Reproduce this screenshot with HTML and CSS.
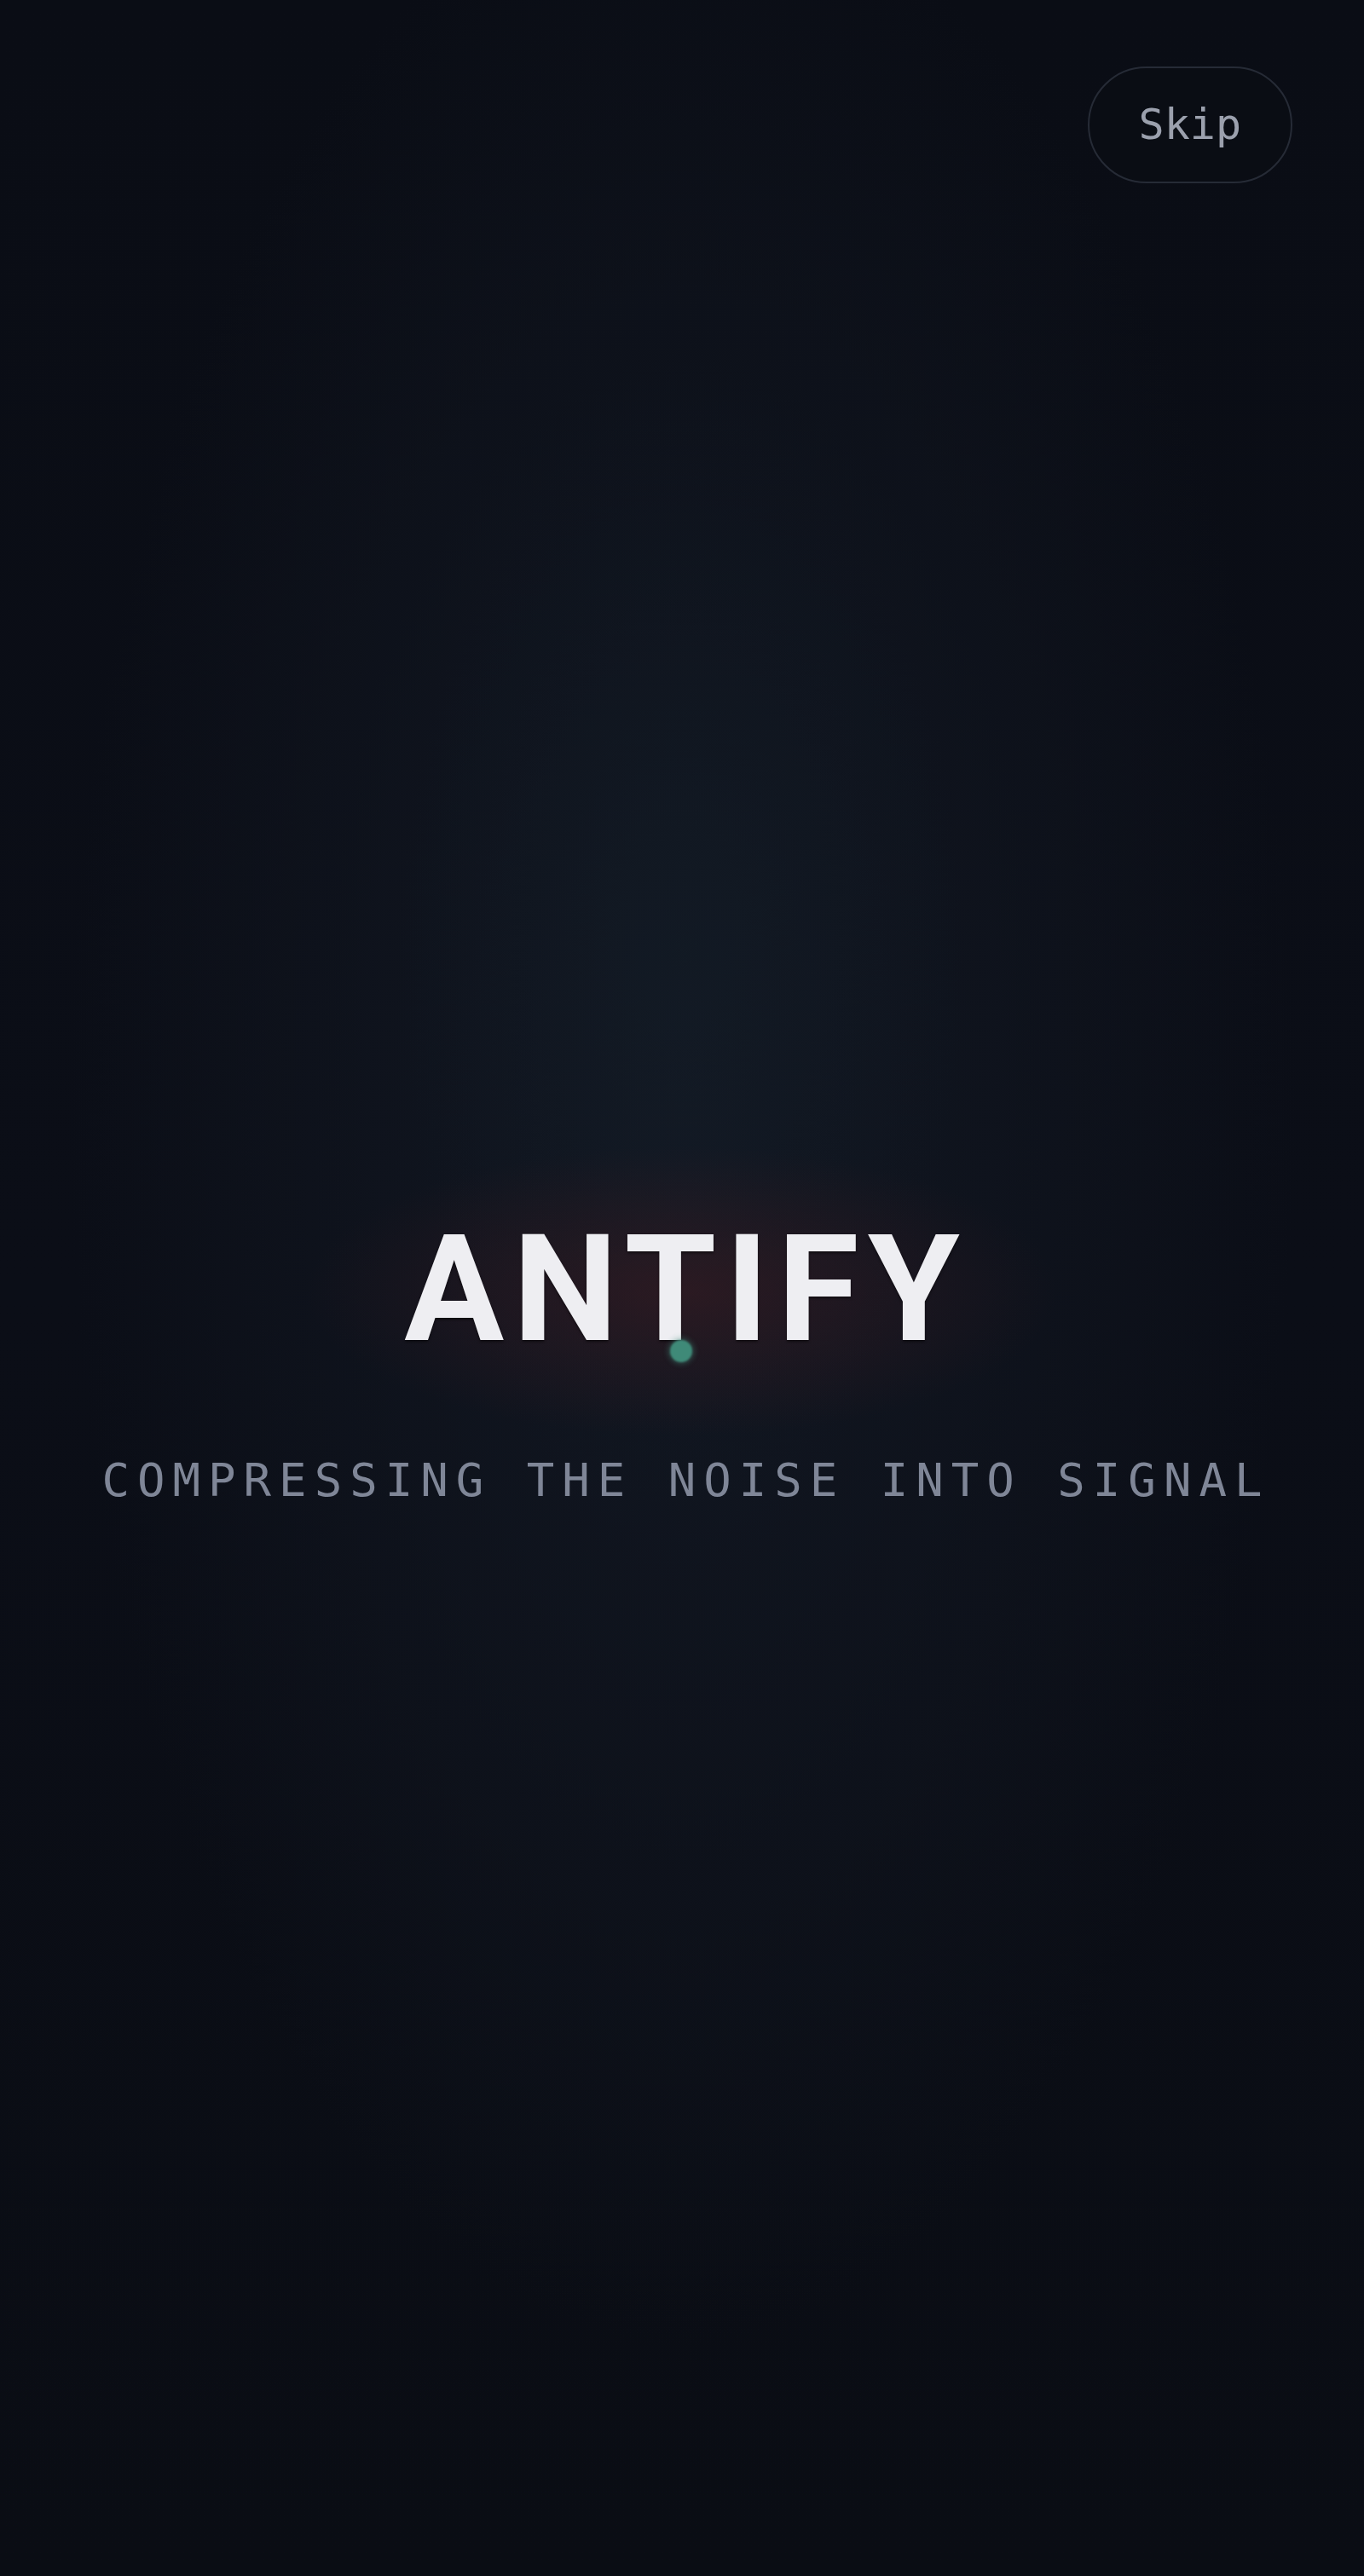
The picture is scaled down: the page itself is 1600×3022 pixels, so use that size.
FILE: index.html
```html
<!DOCTYPE html>
<html lang="en">
<head>
<meta charset="utf-8">
<title>Antify</title>
<link rel="stylesheet" href="styles.css">
</head>
<body>
<div class="screen">
  <button class="skip" type="button">Skip</button>
  <main class="intro">
    <div class="title-wrap">
      <h1 class="title">ANTIFY</h1>
      <span class="dot"></span>
    </div>
    <p class="tagline">COMPRESSING THE NOISE INTO SIGNAL</p>
  </main>
</div>
</body>
</html>
```

FILE: styles.css
```css
* { box-sizing: border-box; }

html, body {
  margin: 0;
  padding: 0;
  background: #0a0d14;
}

.screen {
  position: relative;
  width: 1600px;
  height: 3022px;
  overflow: hidden;
  background:
    radial-gradient(ellipse 440px 170px at 800px 1515px, rgba(64, 28, 34, 0.55), rgba(64, 28, 34, 0) 100%),
    radial-gradient(ellipse 330px 650px at 800px 1120px, rgba(20, 32, 42, 0.35), rgba(20, 32, 42, 0) 100%),
    radial-gradient(ellipse 720px 1450px at 800px 1300px, rgba(19, 25, 36, 0.85), rgba(17, 22, 32, 0.4) 70%, rgba(10, 13, 20, 0) 100%),
    linear-gradient(#0a0d15, #0b0e17 50%, #0a0d14);
}

.skip {
  position: absolute;
  top: 78px;
  right: 84px;
  padding: 36px 58px;
  border: 2px solid #262b36;
  border-radius: 999px;
  background: rgba(10, 13, 20, 0.6);
  color: #9ba0ad;
  font-family: "DejaVu Sans Mono", "Liberation Mono", monospace;
  font-size: 50px;
  line-height: 61px;
  cursor: pointer;
}

.intro {
  height: 100%;
  padding-top: 168px;
  display: flex;
  flex-direction: column;
  align-items: center;
  justify-content: center;
}

.title-wrap {
  position: relative;
}

.title {
  margin: 0;
  font-family: Roboto, "Liberation Sans", sans-serif;
  font-weight: 700;
  font-size: 174px;
  line-height: 1;
  letter-spacing: 0.06em;
  margin-right: -0.06em;
  color: #eeeef2;
  text-shadow: 0 2px 3px rgba(0, 0, 0, 0.5);
}

.dot {
  position: absolute;
  left: calc(50% - 14px);
  top: 146px;
  width: 26px;
  height: 26px;
  border-radius: 50%;
  background: #3f8a78;
  box-shadow: 0 0 6px 2px rgba(63, 138, 120, 0.45);
  filter: blur(1px);
}

.tagline {
  margin: 110px 0 0;
  font-family: "DejaVu Sans Mono", "Liberation Mono", monospace;
  font-size: 54px;
  line-height: 1;
  letter-spacing: 9px;
  margin-right: -9px;
  color: #7f8697;
}
```
